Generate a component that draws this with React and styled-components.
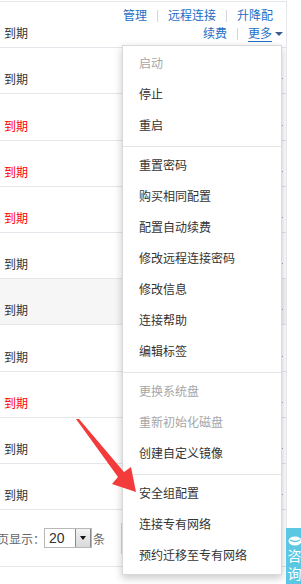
import React from 'react';
import styled, { createGlobalStyle } from 'styled-components';

const GlobalStyle = createGlobalStyle`
  html, body {
    margin: 0;
    padding: 0;
    background: #fff;
    overflow: hidden;
  }
  body {
    font-family: "Liberation Sans", "Noto Sans CJK SC", sans-serif;
    font-size: 12px;
    color: #333;
  }
`;

const Page = styled.div`
  position: relative;
  width: 301px;
  height: 584px;
  padding-top: 1px;
  box-sizing: border-box;
`;

const Table = styled.div`
  position: relative;
  width: 287px;
  border-top: 1px solid #e3e6ea;
  border-right: 1px solid #e3e6ea;
  box-sizing: border-box;
  overflow: hidden;
  padding-bottom: 30px;
`;

const Row = styled.div`
  display: flex;
  justify-content: space-between;
  align-items: flex-end;
  height: 46.2px;
  box-sizing: border-box;
  padding: 0 3px 4px 4px;
  border-bottom: 1px solid #e3e6ea;
  background: ${p => (p.$active ? '#f6f6f7' : '#fff')};
`;

const Status = styled.span`
  line-height: 18px;
  color: ${p => (p.$expired ? '#ff0000' : '#333')};
`;

const Actions = styled.div`
  display: flex;
  flex-direction: column;
  align-items: flex-end;
  line-height: 18px;
`;

const LinkLine = styled.div`
  display: flex;
  align-items: center;
  margin-right: ${p => (p.$inset ? '10px' : '0')};
`;

const Link = styled.a`
  color: ${p => (p.$muted ? '#8d99a8' : '#1e6ec6')};
  text-decoration: ${p => (p.$underline ? 'underline' : 'none')};
  text-underline-offset: 3px;
`;

const Bar = styled.span`
  display: inline-block;
  width: 1px;
  height: 12px;
  margin: 0 10px;
  background: #d3d6da;
`;

const Caret = styled.span`
  display: inline-block;
  margin-left: 3px;
  border-left: 4px solid transparent;
  border-right: 4px solid transparent;
  border-top: 4px solid #3a5f8c;
`;

const Pager = styled.div`
  display: flex;
  align-items: center;
  height: 57px;
  box-sizing: border-box;
  border-bottom: 1px solid #e3e6ea;
  color: #666;
`;

const PagerLabel = styled.span`
  margin-left: -15px;
`;

const Select = styled.div`
  display: flex;
  align-items: center;
  justify-content: space-between;
  width: 48px;
  height: 20px;
  box-sizing: border-box;
  border: 1px solid #b8b8b8;
  margin-left: -1px;
  color: #333;
  font-size: 14px;
`;

const SelectValue = styled.span`
  padding-left: 4px;
`;

const SelectButton = styled.span`
  display: flex;
  align-items: center;
  justify-content: center;
  width: 16px;
  height: 18px;
  box-sizing: border-box;
  border-left: 1px solid #8a8a8a;
  border-right: 1px solid #8a8a8a;
  background: linear-gradient(#f2f2f2, #d9d9d9);

  &::after {
    content: '';
    border-left: 3px solid transparent;
    border-right: 3px solid transparent;
    border-top: 4px solid #111;
  }
`;

const PagerUnit = styled.span`
  margin-left: 1px;
`;

const PageBox = styled.div`
  width: 80px;
  height: 31px;
  margin-left: 16px;
  box-sizing: border-box;
  border: 1px solid #d6d6d6;
`;

const Menu = styled.ul`
  position: absolute;
  top: 43px;
  left: 122px;
  width: 160px;
  margin: 0;
  padding: 3px 0 2px;
  list-style: none;
  box-sizing: border-box;
  background: #fff;
  border: 1px solid #d9d9d9;
  box-shadow: 0 3px 8px rgba(0, 0, 0, 0.22);
  z-index: 2;
`;

const MenuItem = styled.li`
  height: 31px;
  line-height: 31px;
  padding: 0 16px;
  white-space: nowrap;
  color: ${p => (p.$disabled ? '#a6a6a6' : '#333')};
`;

const Divider = styled.li`
  height: 1px;
  margin: 4px 0;
  background: #e5e5e5;
`;

const Pointer = styled.svg`
  position: absolute;
  left: 70px;
  top: 410px;
  z-index: 3;
`;

const Consult = styled.div`
  position: absolute;
  left: 286px;
  top: 528px;
  width: 17px;
  height: 60px;
  background: #5cc7e3;
  color: #fff;
  display: flex;
  flex-direction: column;
  align-items: center;
  padding-top: 8px;
  box-sizing: border-box;
  font-family: "Noto Sans CJK SC", sans-serif;
  font-size: 14px;
  line-height: 18px;
`;

const rows = [
  false, false, true, true, true, false, false, false, true, false, false,
];

const menu = [
  { label: '启动', disabled: true },
  { label: '停止' },
  { label: '重启' },
  'sep',
  { label: '重置密码' },
  { label: '购买相同配置' },
  { label: '配置自动续费' },
  { label: '修改远程连接密码' },
  { label: '修改信息' },
  { label: '连接帮助' },
  { label: '编辑标签' },
  'sep',
  { label: '更换系统盘', disabled: true },
  { label: '重新初始化磁盘', disabled: true },
  { label: '创建自定义镜像' },
  'sep',
  { label: '安全组配置' },
  { label: '连接专有网络' },
  { label: '预约迁移至专有网络' },
];

export default function App() {
  return (
    <>
      <GlobalStyle />
      <Page>
        <Table>
          {rows.map((expired, i) => (
            <Row key={i} $active={i === 6}>
              <Status $expired={expired}>到期</Status>
              <Actions>
                <LinkLine $inset>
                  <Link>管理</Link>
                  <Bar />
                  <Link>远程连接</Link>
                  <Bar />
                  <Link>升降配</Link>
                </LinkLine>
                <LinkLine>
                  <Link>续费</Link>
                  <Bar />
                  <Link $underline>更多</Link>
                  <Caret />
                </LinkLine>
              </Actions>
            </Row>
          ))}
          <Pager>
            <PagerLabel>每页显示：</PagerLabel>
            <Select>
              <SelectValue>20</SelectValue>
              <SelectButton />
            </Select>
            <PagerUnit>条</PagerUnit>
            <PageBox />
          </Pager>
          <Menu>
            {menu.map((item, i) =>
              item === 'sep' ? (
                <Divider key={i} />
              ) : (
                <MenuItem key={i} $disabled={item.disabled}>
                  {item.label}
                </MenuItem>
              )
            )}
          </Menu>
        </Table>
        <Pointer width="80" height="90" viewBox="0 0 80 90">
          <polygon
            points="6,9 9,9 54,62 61,57 66,82 42,74 48,67"
            fill="#f43b3b"
          />
        </Pointer>
        <Consult>
          <svg width="14" height="10" viewBox="0 0 14 10">
            <ellipse cx="7" cy="5" rx="6.5" ry="4.5" fill="#fff" />
            <path d="M2 4 Q7 7 12 4" stroke="#5cc7e3" strokeWidth="1.4" fill="none" />
          </svg>
          <span>咨</span>
          <span>询</span>
        </Consult>
      </Page>
    </>
  );
}
